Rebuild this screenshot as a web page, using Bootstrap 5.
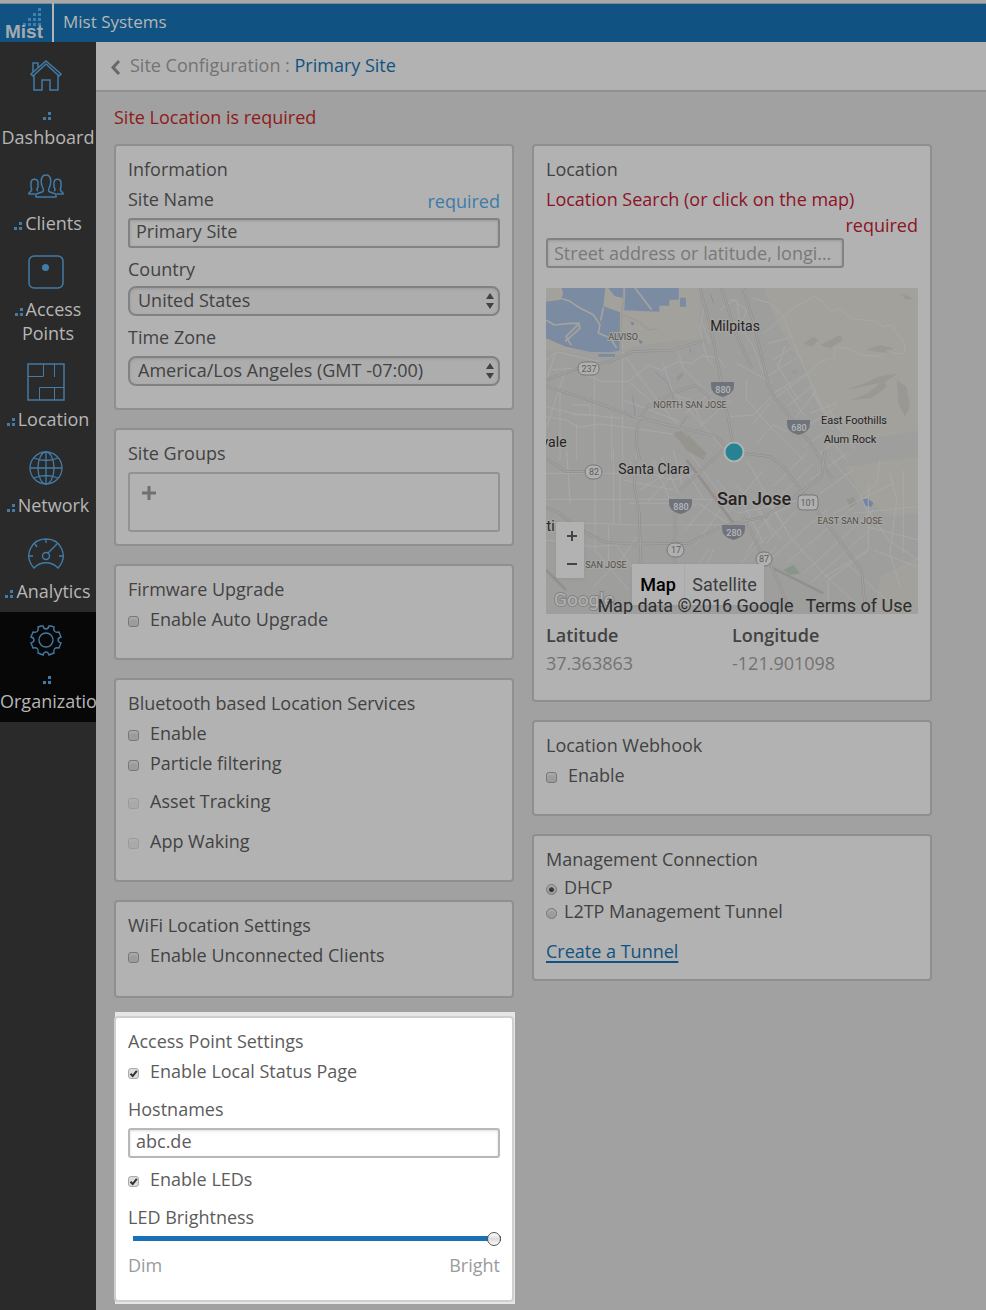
<!DOCTYPE html>
<html lang="en">
<head>
<meta charset="utf-8">
<meta name="viewport" content="width=device-width, initial-scale=1">
<title>Mist Systems - Site Configuration</title>
<link href="https://cdn.jsdelivr.net/npm/bootstrap@5.3.0/dist/css/bootstrap.min.css" rel="stylesheet">
<style>
:root{--page:#a1a1a1;--panel:#b2b2b2;--edge:#8f8f8f;--ink:#424242;--blue:#105281;--sky:#427ba6}
body{font:18px/24px "Open Sans",sans-serif;background:var(--page);color:var(--ink);min-height:100vh;overflow-x:hidden}
.topbar{height:42px;background:var(--blue);border-top:3px solid #a9a9a9;box-shadow:inset 0 1px #7c8a94;color:#b6b6b6}
.brand{width:54px;border-right:2px solid #b4b4b4}
.brand svg,.map-art{display:block}
.org-name{padding:7px 9px;font-size:17px}
.side{width:96px;flex:none;background:#2a2a2a;padding-top:6px}
.side a{display:block;overflow:hidden;padding-bottom:9px;color:#b6b6b6;text-decoration:none;font-weight:500}
.side a.active{background:#070707}
.side .glyph{display:block;width:40px;height:40px;margin:8px auto 5px 26px;fill:none;stroke:var(--sky);stroke-width:2}
.side .dots{display:inline-block;vertical-align:baseline;width:8px;height:8px;margin-right:3px;fill:var(--sky)}
.crumbs{height:50px;background:var(--panel);border-bottom:2px solid #909090;padding:0 0 2px 14px;color:#737373}
.crumbs a{color:#737373}
.crumbs strong{font-weight:500;color:var(--blue)}
.alert-line{color:#8f1a1a;padding:13px 18px 15px}
.settings{display:grid;grid-template-columns:1fr 1fr;gap:18px;padding:0 54px 6px 18px}
.stack{display:flex;flex-direction:column;gap:18px;min-width:0}
.panel{background:var(--panel);border:2px solid var(--edge);border-radius:4px;padding:11px 12px 27px}
.panel h2{font:inherit;margin:0 0 6px}
.panel label{display:block}
.panel-info{padding-bottom:22px}
.panel-snug{padding-bottom:12px}
.panel-wifi{padding-bottom:29px}
.title-row{display:flex;justify-content:space-between;margin-bottom:3px}
.required{color:#3d7ba8;line-height:28px}
.caption{margin:9px 0 5px}
.caption-loose{margin:9px 0 7px}
.text-crimson{color:#8c1228}
.needed{margin:2px 0 1px;text-align:right}
.field,.picker{display:block;width:100%;height:30px;font:inherit;color:inherit;background:transparent;border:2px solid #828282;border-radius:3px;padding:0 6px 4px;box-shadow:inset 0 1px 3px #9a9a9a;outline:0}
.field::placeholder{color:#797979;opacity:1}
.field{text-overflow:ellipsis}
.search-field{width:80%;padding-bottom:0}
.picker{appearance:none;border-radius:8px;padding:0 24px 2px 8px;background:#adadad url("data:image/svg+xml,%3Csvg xmlns='http://www.w3.org/2000/svg' width='8' height='16'%3E%3Cpath d='M4 0 8 6H0zM0 10h8l-4 6z' fill='%23424242'/%3E%3C/svg%3E") no-repeat right 4px center}
.groups{height:60px;border:2px solid #929292;border-radius:3px;padding:12px;margin-top:7px}
.add{display:block;border:0;background:none;padding:0;line-height:0}
.tick{display:flex;align-items:center;gap:11px;margin-bottom:6px}
.tick:last-child{margin-bottom:0}
.tick .form-check-input{width:11px;height:11px;flex:none;margin:5px 0 0;border:1px solid #777;background-color:#9c9c9c;border-radius:3px;box-shadow:inset 0 2px 2px #acacac}
.tick .form-check-input[type=radio]{border-radius:50%}
.tick .form-check-input:disabled{opacity:.4}
.tick label,.tick .form-check-input:disabled~label{opacity:1}
.tick-after-field{margin-top:9px}
.radio-tick{gap:7px;margin:0}
.tick .form-check-input:checked[type=radio]{background-image:radial-gradient(circle,#333 0 2px,transparent 3px)}
.tick .form-check-input:checked[type=checkbox]{background-color:#ddd;border-color:#aaa;box-shadow:none;background-image:url("data:image/svg+xml,%3Csvg xmlns='http://www.w3.org/2000/svg' viewBox='0 0 9 9'%3E%3Cpath d='M1.5 4.7 3.7 7 7.8 1.8' fill='none' stroke='%23333' stroke-width='2'/%3E%3C/svg%3E")}
.spotlight{background:#e6e6e6;margin:-4px -1px 0 1px;padding:4px 1px 2px 0}
.spotlight .panel{background:#fff;border-color:#cfcfcf;color:#5c5c5c;margin-left:-1px;padding-bottom:23px}
.spotlight .field{border-color:#b8b8b8;box-shadow:inset 0 1px 3px #ddd}
.level{display:block;appearance:none;width:calc(100% - 4px);height:14px;margin:2px 0 8px 5px;background:none}
.level::-webkit-slider-runnable-track{height:5px;background:#1a70b5}
.level::-webkit-slider-thumb{appearance:none;width:14px;height:14px;margin-top:-4px;border:1px solid #555;border-radius:50%;background:linear-gradient(#fff,#ddd 50%,#fafafa)}
.level-ends{color:#9b9b9b}
.tunnel{color:var(--blue);text-decoration-thickness:2px;text-underline-offset:3px}
.map{position:relative;height:326px;margin:20px 0 9px;overflow:hidden;font-family:Roboto,sans-serif}
.map-art{width:100%;height:100%}
.map button{border:0;background:var(--panel);padding:0;color:#3d3d3d;line-height:0}
.zoomer{position:absolute;left:10px;bottom:36px;width:28px;height:56px;display:grid;background:var(--panel);border-radius:2px;overflow:hidden;box-shadow:0 1px 3px #8885}
.zoomer button{padding-left:3px}
.kinds{position:absolute;left:86px;bottom:9px;display:flex;height:41px;box-shadow:0 1px 3px #8885}
.kinds button{width:52px;line-height:38px}
.kinds button+button{width:80px;border-left:1px solid #a9a9a9}
.kinds .on{color:#000;font-weight:500}
.credits{position:absolute;right:0;bottom:-4px;display:flex;gap:12px;padding-right:6px;color:#2d2d2d;white-space:nowrap}
.credits a{color:inherit;text-decoration:none}
.coords{color:#737373;margin-bottom:-2px}
.coords dt{color:#424242;font-weight:600;margin-bottom:4px}
</style>
</head>
<body class="d-flex flex-column">
<svg width="0" height="0" class="position-absolute" aria-hidden="true"><symbol id="dots" viewBox="0 0 8 8"><path d="M5 0h3v3H5zM0 5h3v3H0zM5 5h3v3H5z"/></symbol></svg>
<header class="topbar d-flex">
  <a class="brand" href="#" aria-label="Mist home"><svg width="52" height="39" viewBox="0 0 52 39"><g fill="#427fac"><path d="M38 5h3v3h-3zM33 10h3v3h-3zM38 10h3v3h-3zM28 15h3v3h-3zM33 15h3v3h-3zM38 15h3v3h-3zM23 20h3v3h-3zM28 20h3v3h-3zM33 20h3v3h-3zM38 20h3v3h-3z"/></g><text x="5" y="35" font-family="Liberation Sans" font-weight="700" font-size="19" fill="#a3abb1">Mist</text></svg></a>
  <div class="org-name">Mist Systems</div>
</header>
<div class="d-flex flex-grow-1">
  <nav class="side text-center" aria-label="Main">
    <a href="#"><svg class="glyph" viewBox="0 0 40 40"><path stroke-width="1.500" d="M5 18 20 5l15 13-2 2L20 8 7 20zM8 19v15h8V24h8v10h8V19M7 16V7h5v5"/></svg><svg class="dots"><use href="#dots"/></svg> Dashboard</a>
    <a href="#"><svg class="glyph" viewBox="0 0 40 40"><path stroke-width="1.500" d="M10 31v-3l6-2c2-1 2-2 0-6-2-7 0-11 4-11s6 4 4 11c-2 4-2 5 0 6l6 2v3zM12 25c-2-1-1-2 0-4v-4c0-5-7-5-7 0v4c1 2 1 3 0 4l-2 2v1h6M28 25c2-1 1-2 0-4v-4c0-5 7-5 7 0v4c-1 2-1 3 0 4l2 2v1h-6"/></svg><svg class="dots"><use href="#dots"/></svg>Clients</a>
    <a href="#"><svg class="glyph" viewBox="0 0 40 40"><rect x="3" y="4" width="34" height="32" rx="5" stroke-width="1.500"/><circle cx="19.500" cy="15.500" r="3.500" fill="#427ba6" stroke="none"/></svg><svg class="dots"><use href="#dots"/></svg>Access Points</a>
    <a href="#"><svg class="glyph" viewBox="0 0 40 40"><path stroke-width="1.500" d="M2 2h36v36H2z"/><path stroke-width="1" d="M2 14.500h15.500V2M28.500 2v13M13.500 38V25.500H38M28.500 25v13"/></svg><svg class="dots"><use href="#dots"/></svg>Location</a>
    <a href="#"><svg class="glyph" viewBox="0 0 40 40"><g stroke-width="1.300"><circle cx="20" cy="20" r="16"/><ellipse cx="20" cy="20" rx="8" ry="16"/><path d="M20 4v32M4 20h32M8 10q12 5 24 0M8 30q12-5 24 0"/></g></svg><svg class="dots"><use href="#dots"/></svg>Network</a>
    <a href="#"><svg class="glyph" viewBox="0 0 40 40"><g stroke-width="1.400"><path d="M8 34C-3 22 5 5 20 5s23 17 12 29c-7-7-17-7-24 0zM3 22h4M37 22h-4M20 5v4M9 10l2 3M22 19l9-9"/><circle cx="20" cy="22" r="3.500"/></g></svg><svg class="dots"><use href="#dots"/></svg>Analytics</a>
    <a class="active" href="#"><svg class="glyph" viewBox="0 0 40 40"><g stroke-width="1.400"><circle cx="20" cy="20" r="7"/><path d="M15 6h2c1 4 5 4 6 0h2l3 1c-1 4 1 6 5 5l2 5c-4 1-4 5 0 6l-2 5c-4-1-6 1-5 5l-5 2c-1-4-5-4-6 0l-5-2c1-4-1-6-5-5l-2-5c4-1 4-5 0-6l2-5c4 1 6-1 5-5z"/></g></svg><svg class="dots"><use href="#dots"/></svg> Organization</a>
  </nav>
  <main class="flex-grow-1 overflow-hidden">
    <div class="crumbs d-flex align-items-center">
      <a href="#" aria-label="Back"><svg class="d-block mt-1" width="20" height="16"><path d="M9 2 3 8.500 9 15" fill="none" stroke="#686868" stroke-width="3"/></svg></a>
      <span>Site Configuration : <strong>Primary Site</strong></span>
    </div>
    <div class="alert-line" role="alert">Site Location is required</div>
    <form class="settings">
      <div class="stack">
        <section class="panel panel-info">
          <h2>Information</h2>
          <div class="title-row"><label for="site">Site Name</label><span class="required">required</span></div>
          <input class="field" id="site" value="Primary Site">
          <label class="caption" for="country">Country</label>
          <select class="picker" id="country"><option>United States</option></select>
          <label class="caption-loose" for="zone">Time Zone</label>
          <select class="picker" id="zone"><option>America/Los Angeles (GMT -07:00)</option></select>
        </section>
        <section class="panel panel-snug">
          <h2>Site Groups</h2>
          <div class="groups"><button class="add" type="button" aria-label="Add site group"><svg width="14" height="14"><path d="M7 0v14M0 7h14" stroke="#707070" stroke-width="3"/></svg></button></div>
        </section>
        <section class="panel">
          <h2>Firmware Upgrade</h2>
          <div class="tick"><input class="form-check-input" type="checkbox" id="auto"><label for="auto">Enable Auto Upgrade</label></div>
        </section>
        <section class="panel">
          <h2>Bluetooth based Location Services</h2>
          <div class="tick"><input class="form-check-input" type="checkbox" id="ble"><label for="ble">Enable</label></div>
          <div class="tick"><input class="form-check-input" type="checkbox" id="part"><label for="part">Particle filtering</label></div>
          <div class="tick pt-2 pb-2 mb-2"><input class="form-check-input" type="checkbox" id="asset" disabled><label for="asset">Asset Tracking</label></div>
          <div class="tick"><input class="form-check-input" type="checkbox" id="wake" disabled><label for="wake">App Waking</label></div>
        </section>
        <section class="panel panel-wifi">
          <h2>WiFi Location Settings</h2>
          <div class="tick"><input class="form-check-input" type="checkbox" id="unc"><label for="unc">Enable Unconnected Clients</label></div>
        </section>
        <div class="spotlight">
          <section class="panel">
            <h2>Access Point Settings</h2>
            <div class="tick"><input class="form-check-input" type="checkbox" id="status" checked><label for="status">Enable Local Status Page</label></div>
            <label class="caption-loose mt-0 pt-2" for="host">Hostnames</label>
            <input class="field" id="host" value="abc.de">
            <div class="tick tick-after-field"><input class="form-check-input" type="checkbox" id="led" checked><label for="led">Enable LEDs</label></div>
            <label class="pt-2" for="bright">LED Brightness</label>
            <input class="level" id="bright" type="range" min="0" max="100" value="100">
            <div class="level-ends d-flex justify-content-between"><span>Dim</span><span>Bright</span></div>
          </section>
        </div>
      </div>
      <div class="stack">
        <section class="panel">
          <h2>Location</h2>
          <label class="text-crimson" for="search">Location Search (or click on the map)</label>
          <div class="text-crimson needed">required</div>
          <input class="field search-field" id="search" placeholder="Street address or latitude, longitude">
          <div class="map">
            <svg class="map-art" viewBox="0 0 372 326" preserveAspectRatio="xMidYMid slice" role="img" aria-label="Map of San Jose">
              <rect width="372" height="326" fill="#9e9e9d"/>
              <g transform="scale(.3333) translate(-18-24)" fill="none" stroke-linejoin="round">
                <path fill="#a3a19b" d="M18 24h460v150l-170 20-60 15-230 0zM670 24h464v430l-200 30-60-60-60-80-10-60-90-150zM1134 530v170l-90 10-80-70-50-80z"/>
                <path fill="#a3a19b" d="M1020 890l114-60v172h-130z"/>
                <path fill="#7b8ba1" d="M65 24h131l-6 55 50 18-2 115-30 5-60-2-70-15-60-25V65l42-5 10-18zM205 24h45v30l-25-5zM256 24h160v35h-28v18h-30v18l-105-4zM420 53h18v27h-18zM175 222h50v8h-50z"/>
                <path stroke="#a5a39e" stroke-width="5" d="M60 24l0 30 30 10 30 20 40 20 20 30-5 25 35 15 20 30M18 120l25 15 50-5 25 0-40 40 15 25M75 185l45-40-5-15M190 82l-8 40M285 24l50 65"/>
                <path stroke="#9c9a96" stroke-width="4" d="M252 24l-8 100-2 90M248 105l40 15 40 30 25-5"/>
                <path fill="#999894" d="M790 190l30-20 15 10-20 20zM840 195l60-30 10 15-40 25zM980 210l40-15 40 10-20 15zM915 330l60-20 40-20 60-10-40 25-70 15zM935 360l50-20 45-40 10 20-45 35zM1070 300l30 20 10 60-15 30-20-40zM1080 40l40 15-20 5zM750 275l25-5-10 12z"/>
                <path fill="#95948f" d="M400 460l30-10 70 70-10 20-50-30zM920 660l20-10 10 20-20 15zM408 293l18-15 5 8-18 15z"/>
                <path fill="#899587" d="M730 870l30-15 20 25-30 5z"/>
                <path fill="#7186a3" d="M965 658l20-2 15 12-5 12-20-3zM272 125l12 4-8 8zM295 178l15 8-10 6z"/>
                <path stroke="#7b8ba1" stroke-width="2" d="M345 275l40 35 20 60M278 350l8 55M510 40l12 30M440 410l-20 30M450 205l2 15"/>
                <g stroke="#a9a9a9" stroke-width="3">
                  <path d="M18 240l30-25 130 30M48 215l-30 90M30 270l70-5 65 30 20 10h80l60-50 40 15 50-25 40 5 30-22 50 5 20 30M80 260l-60 180M163 270v270M248 190v350M18 410l60 10 40 22 60-10 80 10 140 20M18 380l80 20 150 15M100 375h50v30h-50M60 330l0 210M110 430v110M215 400v140M270 310l60 50 10 20M248 215l65 95 70 90 60 70M370 250l25 80 70 80 80 90M410 205l20 60 60 60 50 60M490 90l-10 60 20 80 20 30M488 130l20 60M540 90l40-30 40 30-10 30-40 10M390 340l60 20 40 70M435 400l100-80M480 440l90-80M250 360l80 30 90 35M290 400v140"/>
                  <path d="M570 60h20l10 80 40 60 30 80M590 250l90 50 20 10M640 55l50 15 40 40 20 50 50 120 50 110 40 50 60 70M670 160l60-50 30-25 60-35 25 10 15 20 10 15 30-10 30 30 80 10 20 15 25-5 20 30 20 25-2 30-30 0-20-10-20 20-60-5-40-20-40-5 0 30-50 20-20 25-110 80M685 190l60-15M700 240l60-40M680 290l95-60M700 340l100-60M740 380l75-60M770 410l60-80M710 250l65 110M735 200l-20 60M735 320l60 90M620 300l0 60 80 90 90 90M570 410l70-5 80-80M640 430l50-60M650 490l50-55 40 20M820 340l60 110M860 370l40 80M810 400l80-30M800 440l90-60M790 500l60-40M840 520l40-30 40 50"/>
                  <path d="M18 658h550M18 730h150l120 5h280M18 580h270M165 510v300M80 510l10 160M220 510v220M240 580v150M110 730v130M205 735v120M18 780l140 20 140-10M160 920l90-90 40-60M165 810l100 120M250 560l150 40 60-20M250 600l150 30M300 630l110-70M320 670l90-100M270 670h140M340 540l50 120M365 530l50 110M400 510l30 120M420 545l70 110M450 520l90 120M405 700l70-30 120 80M435 750l80-90M470 790l70-100M500 620l70 80M530 600l60 70M465 870l40-60M490 880l30-70M220 780l70 100"/>
                  <path d="M570 690l100-120M585 610l140 170M620 540l130 230 100 110 130 120M590 700l240-50M600 740l150-60M650 750l90-90M680 790l90-100M700 830l160-140M740 850l200-170M790 880l210-190M810 910l190-170M855 890l130-80 0-200M870 530l90 110 20 50M810 600l110-80M840 640l100-70M880 700l180-90M960 650l50-40 10-70M985 690l60 90 90 60M980 740l155 40M1000 810l130 50M1050 580l20 80-20 160 30 100M1090 570v250M985 810l-120 90v90M920 850l130 120M620 820l40-70M600 850l80-80M640 870l70-70M700 620l100-100M720 650l100-100M610 670l60 120M640 650l60 120M660 630l80 120M940 700l190-20"/>
                </g>
                <g stroke="#92908d" stroke-width="8"><path d="M18 300l110-40 80-15 70-30 120-5 100-30M18 318l110 35 150 55 120 30 130 30 60 60M480 24l35 130 30 160 35 180M545 24l40 130 50 110M610 24l30 100 45 190 20 40 110 140 60 100M440 540l60 80 80 110M300 540l-12-50 4-60 30-50 90-45 50-20 30 20 20 20M610 520l80 10 40 30 60 80 100 130 75 100 10 110M855 510l-10 80-80 60-90 60-130 30-100 50-170 2-80-5-60-30-80-60-50-20H18M18 535l60 40h80M405 680v230M420 630l130-120M288 540l-5 80 15 80 5 150M610 710l50 100 30 40 60 140M690 860l120 60 40 20M18 870l60 60"/></g>
                <path stroke="#a3a19f" stroke-width="4" d="M18 300l110-40 80-15 70-30 120-5 100-30M18 318l110 35 150 55 120 30 130 30 60 60M480 24l35 130 30 160 35 180M545 24l40 130 50 110M610 24l30 100 45 190 20 40 110 140 60 100M610 520l80 10 40 30 60 80 100 130 75 100 10 110M855 510l-10 80-80 60-90 60-130 30-100 50-170 2-80-5-60-30-80-60-50-20H18M18 535l60 40h80M300 540l-12-50 4-60 30-50 90-45 50-20 30 20 20 20M405 680v230M420 630l130-120M288 540l-5 80 15 80 5 150M610 710l50 100 30 40 60 140"/>
              </g>
              <g font-family="Roboto" font-size="9" text-anchor="middle">
                <g fill="#b0b0b0" stroke="#777" stroke-width="1"><rect x="32" y="74" width="21" height="13" rx="6"/><rect x="39" y="177" width="17" height="14" rx="7"/><rect x="121" y="255" width="17" height="14" rx="7"/><rect x="210" y="264" width="16" height="14" rx="7"/><rect x="252" y="207" width="20" height="15" rx="4"/></g>
                <g fill="#6f747c"><path id="shield" d="M165 94h23v4q0 8-11.500 11-11.500-3-11.500-11z"/><use href="#shield" x="76" y="38"/><use href="#shield" x="-42" y="117"/><use href="#shield" x="11" y="143"/></g>
                <g fill="#5c5c5c"><text x="43" y="84">237</text><text x="48" y="187">82</text><text x="130" y="265">17</text><text x="218" y="274">87</text><text x="262" y="218">101</text></g>
                <g fill="#b8b8b8" font-weight="500"><text x="177" y="105">880</text><text x="253" y="143">680</text><text x="135" y="222">880</text><text x="188" y="248">280</text></g>
                <g fill="#554e47" stroke="#a6a6a4" stroke-width="2" paint-order="stroke"><text x="77" y="52">ALVISO</text><text x="144" y="120">NORTH SAN JOSE</text><text x="304" y="236">EAST SAN JOSE</text><text x="60" y="280">SAN JOSE</text></g>
                <g font-size="14" fill="#27231f" stroke="#a5a5a4" stroke-width="2" paint-order="stroke"><text x="189" y="43">Milpitas</text><text x="108" y="186">Santa Clara</text><text x="8" y="159">vale</text><text x="2" y="243">rti</text><g font-size="11"><text x="308" y="136">East Foothills</text><text x="304" y="155">Alum Rock</text></g><text x="208" y="217" font-size="18" font-weight="500">San Jose</text></g>
                <text x="38" y="318" font-size="19" fill="#b2b2b2" stroke="#848484" stroke-width="2" paint-order="stroke">Google</text>
              </g>
              <circle cx="188" cy="164" r="9.500" fill="#278394" stroke="#aeb3b4" stroke-width="2"/>
            </svg>
            <div class="zoomer"><button type="button" aria-label="Zoom in"><svg width="12" height="12"><path d="M6 1v10M1 6h10" stroke="#444" stroke-width="2"/></svg></button><button type="button" aria-label="Zoom out"><svg width="12" height="12"><path d="M1 6h10" stroke="#444" stroke-width="2"/></svg></button></div>
            <div class="kinds"><button type="button" class="on">Map</button><button type="button">Satellite</button></div>
            <div class="credits"><span>Map data ©2016 Google</span><a href="#">Terms of Use</a></div>
          </div>
          <div class="coords row gx-0"><dl class="col-6 m-0"><dt>Latitude</dt><dd class="m-0">37.363863</dd></dl><dl class="col-6 m-0"><dt>Longitude</dt><dd class="m-0">-121.901098</dd></dl></div>
        </section>
        <section class="panel">
          <h2>Location Webhook</h2>
          <div class="tick"><input class="form-check-input" type="checkbox" id="hook"><label for="hook">Enable</label></div>
        </section>
        <section class="panel panel-snug">
          <h2 class="m-0">Management Connection</h2>
          <div class="pt-1 pb-3">
            <div class="tick radio-tick"><input class="form-check-input" type="radio" name="conn" id="dhcp" checked><label for="dhcp">DHCP</label></div>
            <div class="tick radio-tick"><input class="form-check-input" type="radio" name="conn" id="l2tp"><label for="l2tp">L2TP Management Tunnel</label></div>
          </div>
          <div class="pb-1"><a class="tunnel" href="#">Create a Tunnel</a></div>
        </section>
      </div>
    </form>
  </main>
</div>
<script src="https://cdn.jsdelivr.net/npm/bootstrap@5.3.0/dist/js/bootstrap.bundle.min.js"></script>
</body>
</html>
